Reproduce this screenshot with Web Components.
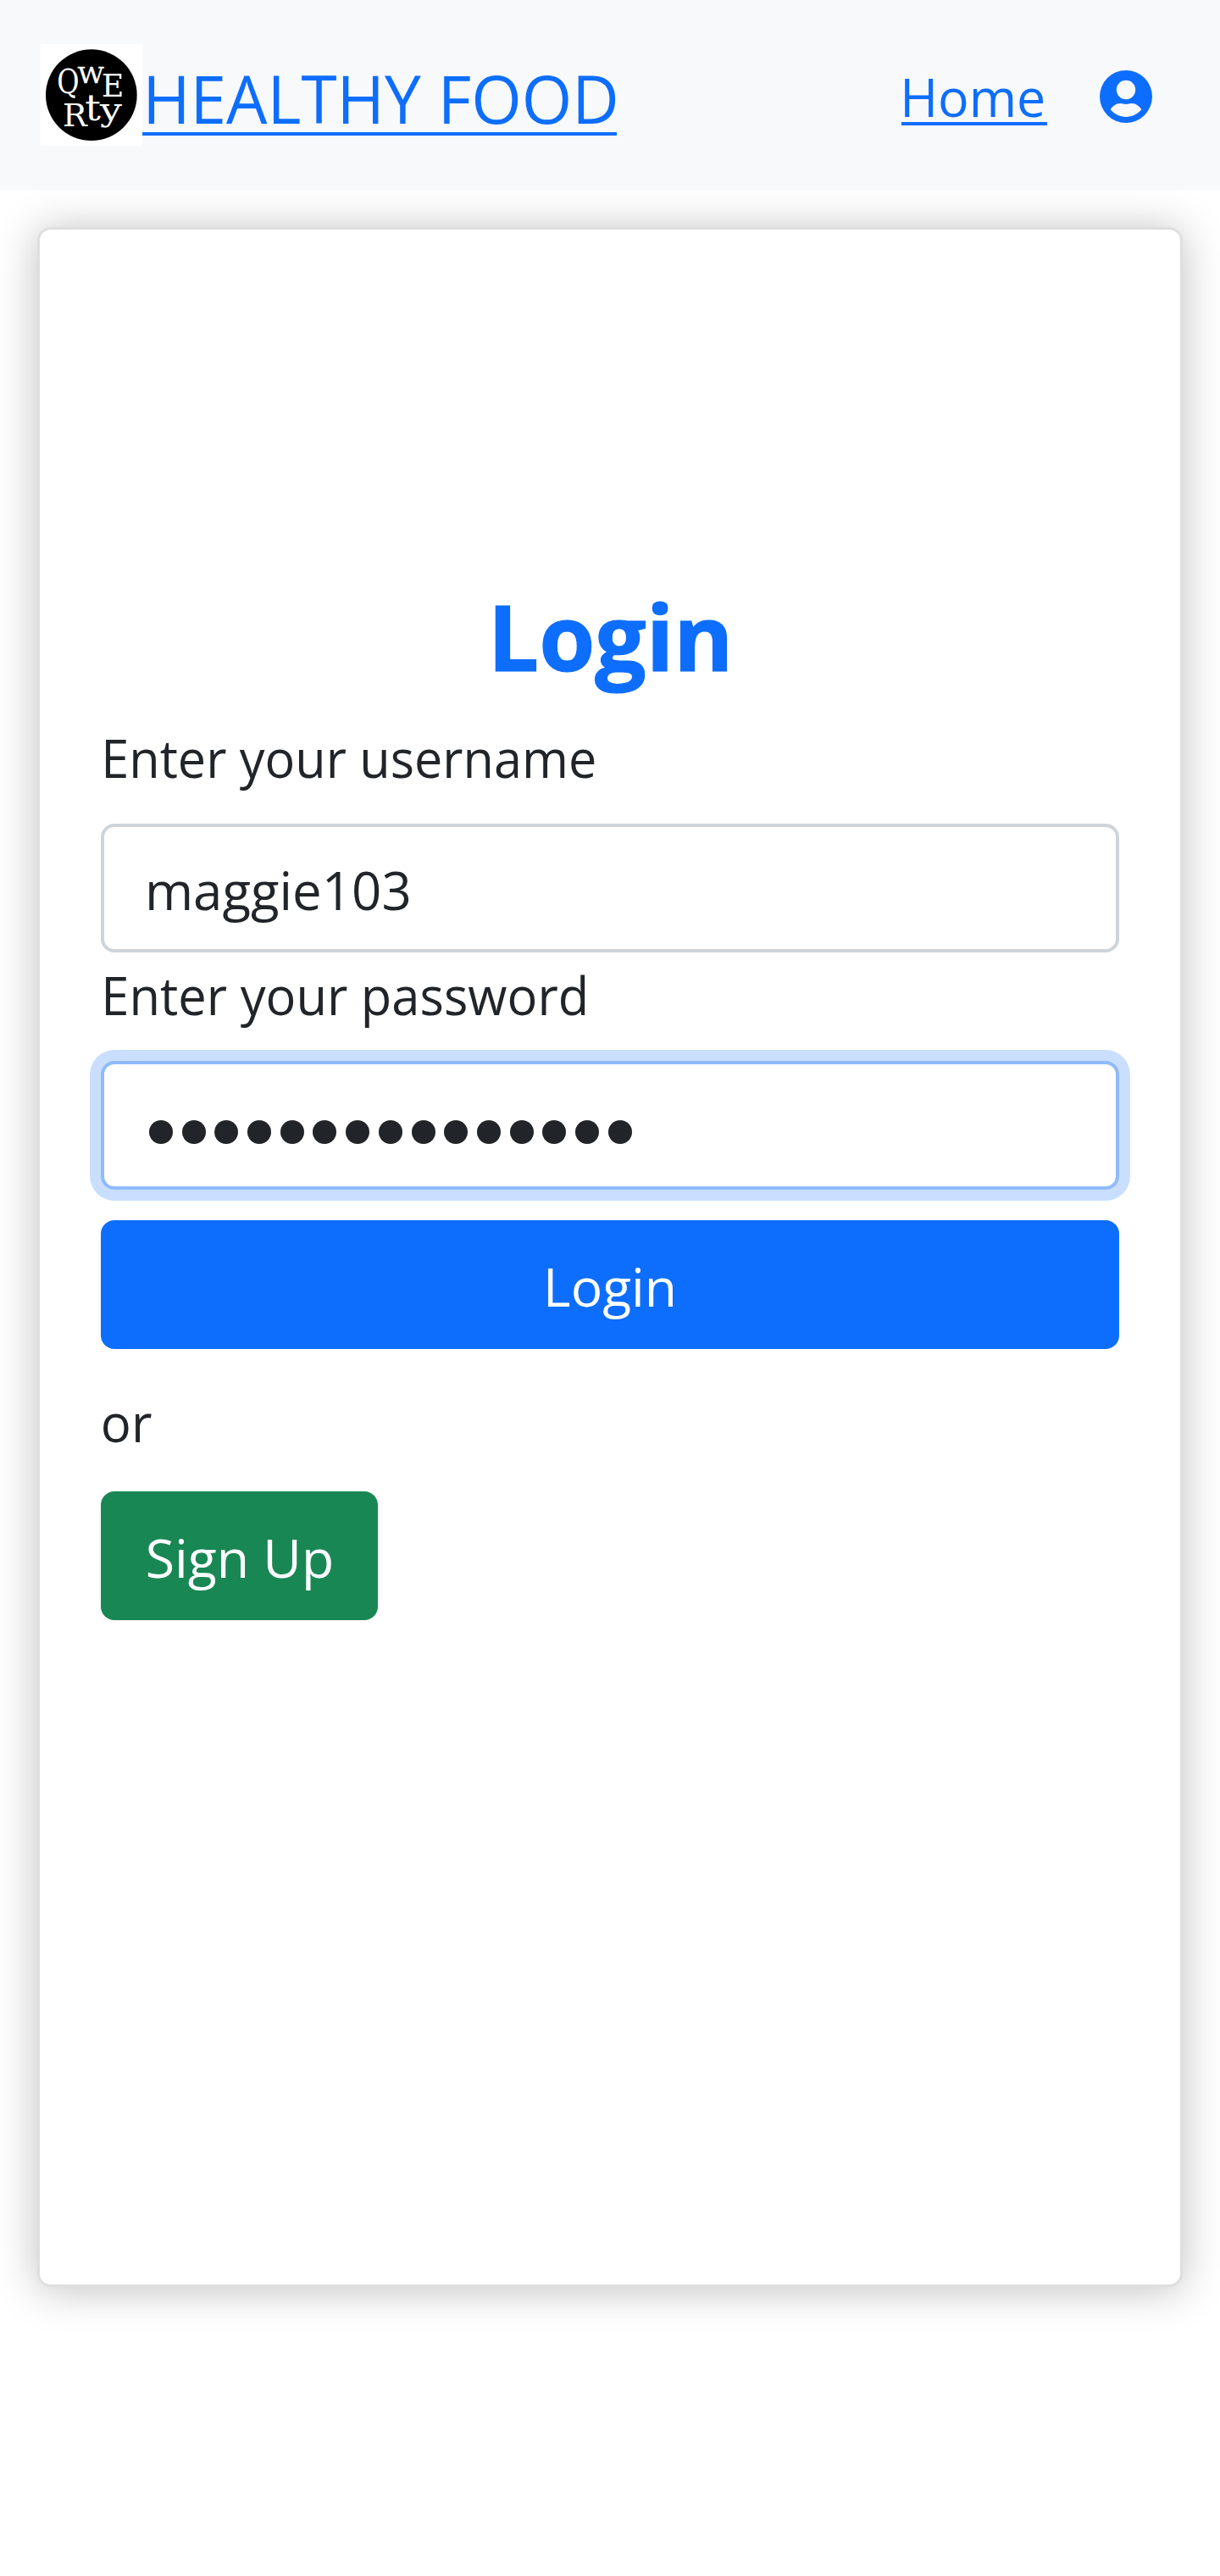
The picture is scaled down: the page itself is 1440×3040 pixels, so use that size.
<!DOCTYPE html>
<html lang="en">
<head>
<meta charset="utf-8">
<title>Healthy Food</title>
<style>
  html, body { margin: 0; background: #fff; }
  body { font-family: "Open Sans", "Noto Sans", sans-serif; color: #212529; font-size: 63px; }
</style>
</head>
<body>
<healthy-app></healthy-app>
<script>
const define = (name, html, init) => customElements.define(name, class extends HTMLElement {
  connectedCallback() {
    if (this.shadowRoot) return;
    this.attachShadow({ mode: 'open' }).innerHTML = html;
    if (init) init(this, this.shadowRoot);
  }
});

/* One line of text whose inked glyphs start at `inset` and span `ink` pixels. */
define('fit-text', `
  <style>
    :host { display: block; white-space: nowrap; }
    span { display: inline-block; transform-origin: 0 50%; vertical-align: top; }
  </style><span><slot></slot></span>`, (el, root) => {
  const cs = getComputedStyle(el);
  const ctx = document.createElement('canvas').getContext('2d');
  ctx.font = `${cs.fontWeight} ${cs.fontSize} ${cs.fontFamily}`;
  const m = ctx.measureText(el.textContent);
  const k = +el.getAttribute('ink') / (m.actualBoundingBoxRight + m.actualBoundingBoxLeft);
  const shift = +el.getAttribute('inset') + m.actualBoundingBoxLeft * k;
  root.querySelector('span').style.transform = `translateX(${shift}px) scaleX(${k})`;
  el.style.width = (el.getAttribute('box') || m.width * k) + 'px';
});

define('brand-logo', `
  <style>
    :host { display: block; width: 120px; height: 120px; }
    svg { display: block; }
    text { font-family: "DejaVu Serif", serif; fill: #fff; }
    .small { stroke: #fff; stroke-width: 1px; }
  </style>
  <svg width="120" height="120" viewBox="144 96 360 360">
    <rect x="144" y="96" width="360" height="360" fill="#fff"/>
    <circle cx="323.5" cy="276.500" r="161.500" fill="#000"/>
    <text x="202" y="271" font-size="115" textLength="79" lengthAdjust="spacingAndGlyphs">Q</text>
    <text class="small" x="275" y="233" font-size="80" textLength="93" lengthAdjust="spacingAndGlyphs">W</text>
    <text x="360" y="283" font-size="110" textLength="79" lengthAdjust="spacingAndGlyphs">E</text>
    <text x="222" y="387" font-size="109" textLength="86" lengthAdjust="spacingAndGlyphs">R</text>
    <text x="301" y="365" font-size="126" textLength="56" lengthAdjust="spacingAndGlyphs">t</text>
    <text x="354" y="366" font-size="114" textLength="78" lengthAdjust="spacingAndGlyphs">y</text>
  </svg>`);

define('user-icon', `
  <style>:host { display: block; width: 62px; height: 62px; } svg { display: block; }</style>
  <svg width="62" height="62" viewBox="774 129 186 186">
    <circle cx="867" cy="222" r="93" fill="#0d6efd"/>
    <circle cx="867" cy="198" r="33.500" fill="#f8f9fb"/>
    <path d="M812 268C820 255 833 245 848 246C855 246 858 249 867 249C876 249 879 246 886 246C901 245 914 255 922 268C907 285 888 294 867 294C846 294 827 285 812 268Z" fill="#f8f9fb"/>
  </svg>`);

define('nav-bar', `
  <style>
    :host { display: flex; position: relative; z-index: 1; box-sizing: border-box; height: 224px; padding: 52px 80px 0 48px; background: #f8f9fb; color: #0d6efd; align-items: flex-start; }
    .brand { font-size: 78.4px; line-height: 82.8px; height: 80.8px; margin-top: 23.2px; border-bottom: 4px solid; }
    .home { margin: 31px 62px 0 auto; line-height: 62px; height: 61px; border-bottom: 4px solid; }
    user-icon { margin-top: 31px; }
  </style>
  <brand-logo></brand-logo>
  <fit-text class="brand" inset="7" ink="552" box="560">HEALTHY FOOD</fit-text>
  <fit-text class="home" inset="4" ink="164" box="172">Home</fit-text>
  <user-icon></user-icon>`);

define('field-box', `
  <style>
    :host { display: block; box-sizing: border-box; height: 152px; border: 4px solid #ced4da; border-radius: 16px; background: #fff; padding: 25.600px 0 0 52px; line-height: 96px; }
    :host([focused]) { border-color: #8fbbfa; box-shadow: 0 0 0 13px #cadfff; }
  </style><slot></slot>`);

define('password-dots', `
  <style>
    :host { display: flex; gap: 10.700px; padding: 40.400px 0 0 1px; }
    i { width: 28px; height: 28px; border-radius: 50%; background: #212529; }
  </style>`, (el, root) => {
  for (let n = +el.getAttribute('count'); n > 0; n--) root.append(document.createElement('i'));
});

define('action-button', `
  <style>
    :host { display: flex; box-sizing: border-box; height: 152px; border-radius: 16px; background: #0d6efd; color: #fff; line-height: 96px; padding-top: 29.600px; justify-content: center; }
    :host([variant="success"]) { background: #198754; width: 327px; justify-content: flex-start; }
  </style><slot></slot>`);

define('login-card', `
  <style>
    :host { display: flex; flex-direction: column; box-sizing: border-box; height: 2431px; margin: 44px 44px 0; padding: 420px 72px 0; border: 3px solid #dfdfdf; border-radius: 16px; background: #fff; box-shadow: 0 3px 50px rgba(0,0,0,.25); line-height: 96px; }
    .title { font-size: 107px; font-weight: 700; line-height: 120px; color: #0d6efd; margin-bottom: 35px; -webkit-text-stroke: 1.2px #0d6efd; }
    .label { margin-bottom: 30px; }
    .second { margin-top: 2px; }
    .login { margin-top: 36px; }
    .or { margin: 38px 0 34px; }
  </style>
  <fit-text class="title" inset="465.800" ink="273.400">Login</fit-text>
  <fit-text class="label" inset="6" ink="577">Enter your username</fit-text>
  <field-box><fit-text inset="0.800" ink="307">maggie103</fit-text></field-box>
  <fit-text class="label second" inset="6" ink="566">Enter your password</fit-text>
  <field-box focused><password-dots count="15"></password-dots></field-box>
  <action-button class="login"><fit-text inset="4" ink="147.500" box="155">Login</fit-text></action-button>
  <fit-text class="or" inset="2.700" ink="57">or</fit-text>
  <action-button variant="success"><fit-text inset="55.700" ink="217">Sign Up</fit-text></action-button>`);

define('healthy-app', `
  <style>:host { display: block; height: 3040px; overflow: hidden; }</style>
  <nav-bar></nav-bar>
  <login-card></login-card>`);
</script>
</body>
</html>
